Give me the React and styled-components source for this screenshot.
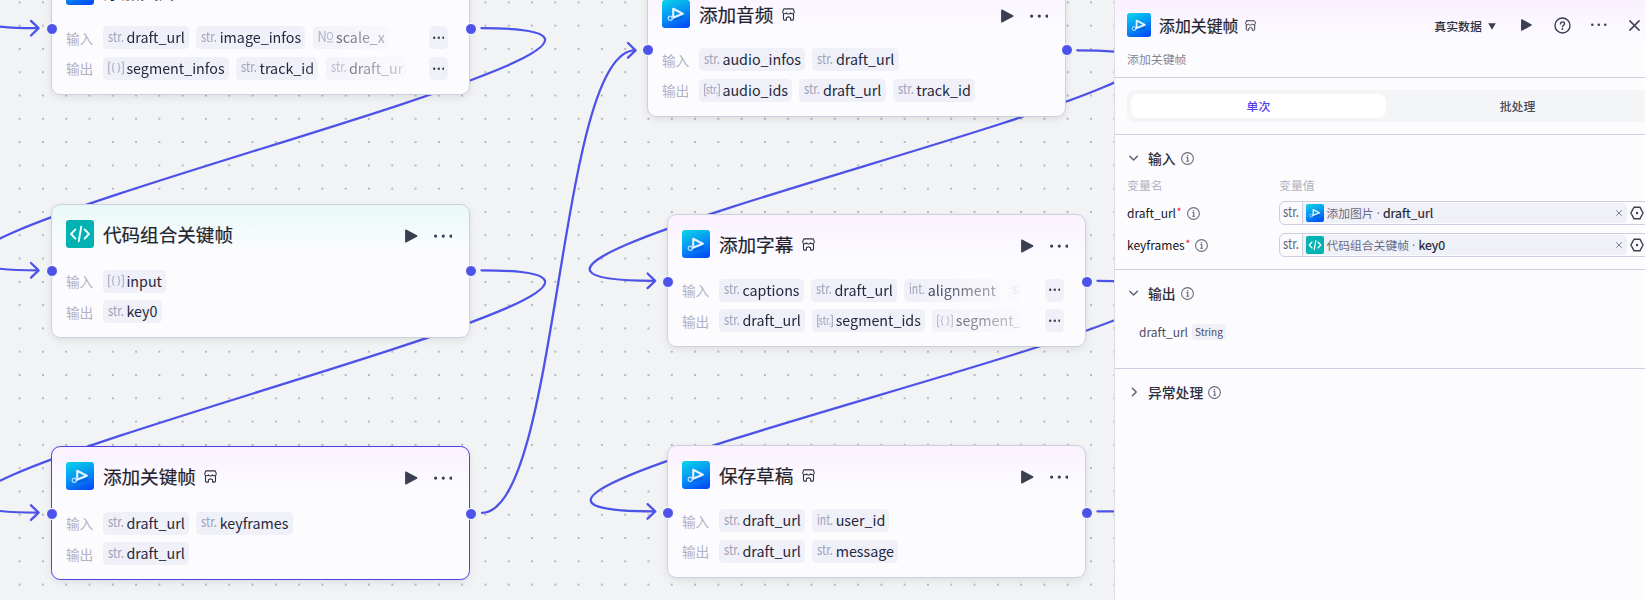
import React from "react";
import styled, { createGlobalStyle } from "styled-components";

const FONT = '"Noto Sans CJK SC", "Noto Sans", sans-serif';

const GlobalStyle = createGlobalStyle`
  * { box-sizing: border-box; }
  body { margin: 0; font-family: ${FONT}; color: #2b2f42; overflow: hidden; }
`;

const Editor = styled.main`
  display: flex;
  width: 100vw;
  height: 600px;
  overflow: hidden;
  background: #f2f3f5;
`;

/* ---------- canvas ---------- */

const Canvas = styled.section`
  position: relative;
  flex: 0 0 1114px;
  height: 600px;
  overflow: hidden;
`;

const Wires = styled.svg`
  position: absolute;
  inset: 0;
  width: 1114px;
  height: 600px;
`;

const Node = styled.article`
  position: absolute;
  left: ${(p) => p.$x}px;
  top: ${(p) => p.$y}px;
  width: 418.6px;
  height: ${(p) => p.$h}px;
  padding: 15px 14.6px 0 13.6px;
  border: 1.16px solid ${(p) => (p.$selected ? "#4e40e5" : "#cdcfe0")};
  border-radius: 9.3px;
  background: linear-gradient(${(p) => (p.$tint === "teal" ? "#e9f9f7" : "#faf1ff")}, #fcfcff 48px);
  box-shadow: 0 2px 7px rgba(0, 0, 0, 0.06), 0 4px 14px rgba(0, 0, 0, 0.03);
`;

const NodeHeader = styled.header`
  display: flex;
  align-items: center;
  height: 28px;
  margin-bottom: ${(p) => p.$gap}px;
`;

const NodeTitle = styled.h3`
  margin: 0 8.4px 0 9px;
  font-size: 18.6px;
  font-weight: 400;
  line-height: 28px;
  color: #23232c;
  -webkit-text-stroke: 0.2px #23232c;
  white-space: nowrap;
`;

const ShopSlot = styled.span`
  display: flex;
`;

const NodeActions = styled.div`
  display: flex;
  align-items: center;
  gap: 16px;
  margin: 4px 2px 0 auto;
`;

const ParamRow = styled.div`
  display: flex;
  align-items: center;
  height: 23px;
  margin-bottom: 7.5px;
  padding-right: 6.4px;
`;

const ParamLabel = styled.span`
  flex: 0 0 37px;
  font-size: 13.7px;
  line-height: 22px;
  color: #b0b1c5;
`;

const Chips = styled.div`
  display: flex;
  gap: 7.2px;
  flex: 1 1 0;
  min-width: 0;
  overflow: hidden;
  ${(p) => p.$fade && "mask-image: linear-gradient(90deg, #000 195px, rgba(0, 0, 0, 0.25) 296px, transparent 303px);"}
`;

const Chip = styled.span`
  display: flex;
  flex: none;
  align-items: center;
  gap: 2.5px;
  height: 23px;
  padding: 0 4.2px 0 5px;
  border-radius: 4.6px;
  background: #f0f0f8;
`;

const ChipName = styled.span`
  padding-bottom: 1.4px;
  font-size: 14.3px;
  line-height: 21.6px;
  color: #24283d;
`;

const More = styled.span`
  display: flex;
  flex: none;
  align-items: center;
  justify-content: center;
  width: 18.6px;
  height: 23px;
  border-radius: 4.6px;
  background: #f0f0f8;
`;

const Port = styled.i`
  position: absolute;
  left: ${(p) => p.$x - 6}px;
  top: ${(p) => p.$y - 6}px;
  width: 12px;
  height: 12px;
  border: 1.2px solid #fff;
  border-radius: 50%;
  background: #4d53e8;
`;

/* ---------- side panel ---------- */

const Panel = styled.aside`
  flex: 0 0 547px;
  height: 600px;
  border-left: 1px solid #dcdde9;
  background: linear-gradient(#faf1ff, #fcfcff 44px);
`;

const PanelHead = styled.header`
  height: 78px;
  padding: 13px 0 0 12px;
  border-bottom: 1px solid #cccee0;
`;

const PanelTitleRow = styled.div`
  display: flex;
  align-items: center;
  height: 24px;
`;

const PanelTitle = styled.h2`
  margin: 1px 6.5px 0 8px;
  font-size: 15.9px;
  font-weight: 400;
  line-height: 24px;
  color: #23232c;
  -webkit-text-stroke: 0.2px #23232c;
`;

const PanelTools = styled.div`
  display: flex;
  align-items: center;
  margin-left: auto;
  margin-right: 21px;
  color: #3b3f52;
`;

const DataMode = styled.span`
  display: flex;
  align-items: center;
  gap: 6px;
  margin-right: 25.5px;
  padding-top: 2px;
  font-size: 11.9px;
  font-weight: 500;
  line-height: 20px;
  color: #2e2f3c;
`;

const ToolGap = styled.span`
  width: ${(p) => p.$w}px;
`;

const Description = styled.p`
  margin: 12px 0 0;
  font-size: 11.9px;
  line-height: 20px;
  color: #868796;
`;

const TabsWrap = styled.div`
  height: 57px;
  padding: 12px 12px 0;
  border-bottom: 1px solid #cccee0;
`;

const Tabs = styled.div`
  display: flex;
  gap: 4px;
  height: 32px;
  padding: 4px;
  border-radius: 8px;
  background: #f4f5f7;
`;

const Tab = styled.button`
  flex: 1;
  padding: 0 0 1px;
  border: 0;
  border-radius: 8px;
  background: ${(p) => (p.$active ? "#fff" : "transparent")};
  color: ${(p) => (p.$active ? "#4e40e5" : "#4b4c58")};
  font: 500 11.9px/22px ${FONT};
`;

const Section = styled.section`
  height: ${(p) => p.$h}px;
  padding: 13px 12px 0;
  ${(p) => !p.$last && "border-bottom: 1px solid #cccee0;"}
`;

const SectionHead = styled.div`
  display: flex;
  align-items: center;
  height: 20px;
  color: #5f6175;
`;

const SectionTitle = styled.h4`
  margin: 0 5px 0 8px;
  font-size: 13.8px;
  font-weight: 500;
  line-height: 20px;
  color: #2f2f3c;
`;

const FieldGrid = styled.div`
  display: grid;
  grid-template-columns: 152px 1fr;
  grid-template-rows: 25px 24px 24px;
  row-gap: 8px;
  align-items: center;
`;

const ColumnLabel = styled.span`
  padding-top: 8px;
  font-size: 11.9px;
  line-height: 20px;
  color: #b2b2bd;
`;

const FieldName = styled.span`
  display: flex;
  align-items: center;
  font-size: 12px;
  line-height: 24px;
  color: #14151c;
`;

const Required = styled.sup`
  align-self: flex-start;
  margin: -1px 5px 0 0.5px;
  font-size: 11px;
  line-height: 22px;
  color: #f22435;
`;

const ValueBox = styled.div`
  display: flex;
  align-items: center;
  height: 24px;
  border: 1px solid #cccee0;
  border-radius: 6px;
`;

const ValueType = styled.span`
  display: flex;
  align-items: center;
  align-self: stretch;
  padding: 0 3px;
  border-right: 1px solid #cccee0;
`;

const ValueRef = styled.div`
  display: flex;
  align-items: center;
  flex: 0 0 324px;
  height: 20px;
  margin-right: 3px;
  padding: 0 5px 0 3px;
  border-radius: 0 4px 4px 0;
  background: #f0f0f8;
`;

const RefSource = styled.span`
  margin-left: 2.4px;
  font-size: 11.8px;
  line-height: 20px;
  color: #686a80;
`;

const RefDot = styled.span`
  width: 9.4px;
  padding-top: 1px;
  font-family: "Open Sans", sans-serif;
  font-size: 12px;
  line-height: 20px;
  text-align: center;
  color: #686a80;
`;

const RefKey = styled.span`
  font-size: 12.3px;
  line-height: 20px;
  color: #1d1f34;
  -webkit-text-stroke: 0.2px #1d1f34;
`;

const ClearSlot = styled.span`
  display: flex;
  margin-left: auto;
`;

const OutputRow = styled.div`
  display: flex;
  align-items: center;
  gap: 4px;
  height: 20px;
  margin: 18.5px 0 0 12px;
  font-size: 12px;
  color: #4b4c5f;
`;

const TypeTag = styled.span`
  height: 16px;
  padding: 0 3px;
  border-radius: 4px;
  background: #f0f0f8;
  font-size: 10px;
  line-height: 16px;
  color: #4b4d61;
`;

/* ---------- icons ---------- */

const PluginLogo = ({ size }) => (
  <svg width={size} height={size} viewBox="0 0 28 28">
    <defs>
      <linearGradient id="plugin" x1="0.2" y1="0" x2="0.65" y2="1">
        <stop offset="0" stopColor="#08cdec" />
        <stop offset="0.5" stopColor="#0796f2" />
        <stop offset="1" stopColor="#0350f5" />
      </linearGradient>
    </defs>
    <rect width="28" height="28" rx="3.2" fill="url(#plugin)" />
    <path d="M11 19.6 L22.4 15 L20.5 18.6 L12 20.8Z" fill="#0445cf" opacity="0.45" />
    <path d="M11.2 17.2 V8.8 L20.8 13.8 L9.6 18.2" fill="none" stroke="#e4f4ff" strokeWidth="2.1" strokeLinejoin="round" />
    <circle cx="8.3" cy="18.2" r="2.1" fill="none" stroke="#b9dcff" strokeWidth="1.2" />
  </svg>
);

const CodeLogo = ({ size }) => (
  <svg width={size} height={size} viewBox="0 0 28 28">
    <rect width="28" height="28" rx="3.2" fill="#00b2b2" />
    <path d="M9.4 9.4 L5 14 L9.4 18.6 M18.6 9.4 L23 14 L18.6 18.6 M15.2 6.8 L12.8 21.2" fill="none" stroke="#fff" strokeWidth="1.9" strokeLinecap="round" strokeLinejoin="round" />
  </svg>
);

const ShopIcon = ({ size }) => (
  <svg width={size} height={size} viewBox="0 0 13 13" fill="none" stroke="#2f3140" strokeWidth="1.1" strokeLinejoin="round" strokeLinecap="round">
    <path d="M2.2 0.9 H10.8 Q11.3 0.9 11.5 1.4 L12.3 3.9 C12.4 5.9 9.5 6.3 8.5 4.9 C7.7 6.3 5.3 6.3 4.5 4.9 C3.5 6.3 0.6 5.9 0.7 3.9 L1.5 1.4 Q1.7 0.9 2.2 0.9 Z" />
    <path d="M1.5 6.2 V11.1 Q1.5 12.1 2.5 12.1 H4.4 V9.8 L6.5 8.7 L8.6 9.8 V12.1 H10.5 Q11.5 12.1 11.5 11.1 V6.2" />
  </svg>
);

const PlayIcon = ({ w, h }) => (
  <svg width={w} height={h} viewBox="0 0 12 13">
    <path d="M0.8 0.9 L11.2 6.5 L0.8 12.1Z" fill="#3b3f52" stroke="#3b3f52" strokeWidth="1.4" strokeLinejoin="round" />
  </svg>
);

const Dots = ({ w, r }) => (
  <svg width={w} height={r * 2 + 1} viewBox={`0 0 ${w} ${r * 2 + 1}`} fill="#3b3f52">
    <circle cx={r} cy={r + 0.5} r={r} />
    <circle cx={w / 2} cy={r + 0.5} r={r} />
    <circle cx={w - r} cy={r + 0.5} r={r} />
  </svg>
);

const InfoIcon = () => (
  <svg width="13" height="13" viewBox="0 0 13 13" fill="none" stroke="#686a7e" strokeWidth="1.1">
    <circle cx="6.5" cy="6.5" r="5.9" />
    <path d="M5.4 5.6 H6.7 V9.2 M5.2 9.3 H8.1" />
    <circle cx="6.5" cy="3.8" r="0.8" fill="#686a7e" stroke="none" />
  </svg>
);

const Chevron = ({ open }) => (
  <svg width="13" height="12" viewBox="0 0 13 12" fill="none" stroke="#5f6175" strokeWidth="1.5" strokeLinecap="round" strokeLinejoin="round">
    <path d={open ? "M2.8 4.2 L6.6 8 L10.4 4.2" : "M5.4 2.2 L9.2 6 L5.4 9.8"} />
  </svg>
);

const HelpIcon = () => (
  <svg width="17" height="17" viewBox="0 0 17 17" fill="none" stroke="#3b3f52" strokeWidth="1.4" strokeLinecap="round">
    <circle cx="8.5" cy="8.5" r="7.5" />
    <path d="M6.5 6.9 C6.5 4.2 10.6 4.3 10.5 6.8 C10.5 8.3 8.5 8.3 8.5 9.8" />
    <circle cx="8.5" cy="12" r="0.95" fill="#3b3f52" stroke="none" />
  </svg>
);

const Cross = ({ size, weight, color }) => (
  <svg width={size} height={size} viewBox="0 0 10 10" fill="none" stroke={color} strokeWidth={weight} strokeLinecap="round">
    <path d="M0.8 0.8 L9.2 9.2 M9.2 0.8 L0.8 9.2" />
  </svg>
);

const HexIcon = () => (
  <svg width="14" height="14" viewBox="0 0 14 14">
    <path d="M4.1 1.2 H9.9 L13.1 7 L9.9 12.8 H4.1 L0.9 7Z" fill="none" stroke="#3b3f52" strokeWidth="1.4" strokeLinejoin="round" />
    <circle cx="7" cy="7" r="1.2" fill="#3b3f52" />
  </svg>
);

/* Condensed data-type glyph that always fills the same slot */
const MarkSvg = styled.svg`
  flex: none;
  overflow: visible;
  font-family: ${FONT};
  font-size: 14.4px;
`;

const TypeMark = ({ type, color = "#a0a2ba" }) => (
  <MarkSvg width="16" height="20" viewBox="0 0 16 20" fill={color}>
    {type.startsWith("[") && (
      <path d="M2.4 4.2 H0.7 V15.8 H2.4 M13.6 4.2 H15.3 V15.8 H13.6" fill="none" stroke={color} strokeWidth="1" />
    )}
    {type === "[str.]" && (
      <text x="1.8" y="14" textLength="12.4" lengthAdjust="spacingAndGlyphs" fontSize="12.5">str.</text>
    )}
    {type === "[{}]" && (
      <path
        d="M6.4 5.2 Q5 5.2 5 6.6 V8.4 Q5 9.6 3.9 9.8 Q5 10 5 11.2 V13 Q5 14.4 6.4 14.4 M9.6 5.2 Q11 5.2 11 6.6 V8.4 Q11 9.6 12.1 9.8 Q11 10 11 11.2 V13 Q11 14.4 9.6 14.4"
        fill="none"
        stroke={color}
        strokeWidth="1"
      />
    )}
    {type === "№" && (
      <>
        <text x="-0.5" y="14.4" textLength="9.2" lengthAdjust="spacingAndGlyphs">N</text>
        <text x="8.2" y="12.2" textLength="7.4" lengthAdjust="spacingAndGlyphs" fontSize="11">O</text>
        <path d="M8.9 13.9 H15" stroke={color} strokeWidth="1.1" />
      </>
    )}
    {type.endsWith(".") && (
      <text x="0" y="14.4" textLength="16" lengthAdjust="spacingAndGlyphs">{type}</text>
    )}
  </MarkSvg>
);

/* ---------- data ---------- */

const NODES = [
  {
    x: 51.3, y: -39.2, h: 133.8, gap: 21.4, port: 29.3, title: "添加图片", plugin: true,
    inputs: [["str.", "draft_url"], ["str.", "image_infos"], ["№", "scale_x"]],
    outputs: [["[{}]", "segment_infos"], ["str.", "track_id"], ["str.", "draft_url"]],
    more: true,
  },
  {
    x: 51.3, y: 204.2, h: 133.8, gap: 21.4, port: 271.4, title: "代码组合关键帧", plugin: false,
    inputs: [["[{}]", "input"]],
    outputs: [["str.", "key0"]],
  },
  {
    x: 51.3, y: 446.2, h: 133.8, gap: 21.4, port: 513.5, title: "添加关键帧", plugin: true, selected: true,
    inputs: [["str.", "draft_url"], ["str.", "keyframes"]],
    outputs: [["str.", "draft_url"]],
  },
  {
    x: 647.3, y: -16, h: 132.5, gap: 20.3, port: 50.3, title: "添加音频", plugin: true,
    inputs: [["str.", "audio_infos"], ["str.", "draft_url"]],
    outputs: [["[str.]", "audio_ids"], ["str.", "draft_url"], ["str.", "track_id"]],
  },
  {
    x: 667.3, y: 214.3, h: 132.5, gap: 20.3, port: 281.9, title: "添加字幕", plugin: true,
    inputs: [["str.", "captions"], ["str.", "draft_url"], ["int.", "alignment"], ["str.", "font"]],
    outputs: [["str.", "draft_url"], ["[str.]", "segment_ids"], ["[{}]", "segment_infos"]],
    more: true,
  },
  {
    x: 667.3, y: 445, h: 132.5, gap: 20.3, port: 512.6, title: "保存草稿", plugin: true,
    inputs: [["str.", "draft_url"], ["int.", "user_id"]],
    outputs: [["str.", "draft_url"], ["str.", "message"]],
  },
];

/* [from, to, horizontal pull of the control points] */
const EDGES = [
  [[481.5, -214], [38, 28.2], 335],
  [[481.5, 28.2], [38, 270.3], 335],
  [[481.5, 270.3], [38, 512.6], 335],
  [[482, 512.8], [635, 50.3], 77],
  [[1077.3, 50.3], [654.6, 280.8], 336],
  [[1097.5, 280.8], [654.6, 511.4], 336],
  [[1097.5, 511.4], [1500, 511.4], 80],
];

const FIELDS = [
  { name: "draft_url", source: "添加图片", key: "draft_url", plugin: true },
  { name: "keyframes", source: "代码组合关键帧", key: "key0", plugin: false },
];

/* ---------- pieces ---------- */

function Params({ label, items, more }) {
  return (
    <ParamRow>
      <ParamLabel>{label}</ParamLabel>
      <Chips $fade={more}>
        {items.map(([type, name], i) => (
          <Chip key={i}>
            <TypeMark type={type} />
            <ChipName>{name}</ChipName>
          </Chip>
        ))}
      </Chips>
      {more && <More><Dots w={11.6} r={1.2} /></More>}
    </ParamRow>
  );
}

function FlowNode({ node }) {
  return (
    <>
      <Node $x={node.x} $y={node.y} $h={node.h} $selected={node.selected} $tint={node.plugin ? "plugin" : "teal"}>
        <NodeHeader $gap={node.gap}>
          {node.plugin ? <PluginLogo size={28} /> : <CodeLogo size={28} />}
          <NodeTitle>{node.title}</NodeTitle>
          {node.plugin && <ShopSlot><ShopIcon size={13} /></ShopSlot>}
          <NodeActions>
            <PlayIcon w={12.5} h={14} />
            <Dots w={18.6} r={1.6} />
          </NodeActions>
        </NodeHeader>
        <Params label="输入" items={node.inputs} more={node.more} />
        <Params label="输出" items={node.outputs} more={node.more} />
      </Node>
      <Port $x={node.x + 0.6} $y={node.port} />
      <Port $x={node.x + 419.6} $y={node.port} />
    </>
  );
}

function Connections() {
  return (
    <Wires>
      <defs>
        <pattern id="dots" x="8" y="-9.3" width="23.29" height="23.29" patternUnits="userSpaceOnUse">
          <circle cx="11.65" cy="11.65" r="1.05" fill="#a6a8ad" />
        </pattern>
      </defs>
      <rect width="1114" height="600" fill="url(#dots)" />
      <g fill="none" stroke="#4d53e8" strokeWidth="2.3" strokeLinecap="round" strokeLinejoin="round">
        {EDGES.map(([[x1, y1], [x2, y2], pull], i) => (
          <g key={i}>
            <path d={`M${x1} ${y1} C${x1 + pull} ${y1} ${x2 - pull} ${y2} ${x2} ${y2}`} />
            <path d={`M${x2 - 7} ${y2 - 7.3} L${x2 + 0.6} ${y2} L${x2 - 7} ${y2 + 7.3}`} />
          </g>
        ))}
      </g>
    </Wires>
  );
}

function SidePanel() {
  return (
    <Panel>
      <PanelHead>
        <PanelTitleRow>
          <PluginLogo size={24} />
          <PanelTitle>添加关键帧</PanelTitle>
          <ShopSlot><ShopIcon size={11} /></ShopSlot>
          <PanelTools>
            <DataMode>
              真实数据
              <svg width="8" height="7" viewBox="0 0 8 7"><path d="M0.2 0.3 H7.8 L4 6.8Z" fill="#3b3f52" /></svg>
            </DataMode>
            <PlayIcon w={11} h={12} />
            <ToolGap $w={21.5} />
            <HelpIcon />
            <ToolGap $w={20} />
            <Dots w={15.6} r={1.3} />
            <ToolGap $w={22.5} />
            <Cross size={11} weight={1.3} color="#3b3f52" />
          </PanelTools>
        </PanelTitleRow>
        <Description>添加关键帧</Description>
      </PanelHead>
      <TabsWrap>
        <Tabs>
          <Tab $active>单次</Tab>
          <Tab>批处理</Tab>
        </Tabs>
      </TabsWrap>
      <Section $h={135}>
        <SectionHead>
          <Chevron open />
          <SectionTitle>输入</SectionTitle>
          <InfoIcon />
        </SectionHead>
        <FieldGrid>
          <ColumnLabel>变量名</ColumnLabel>
          <ColumnLabel>变量值</ColumnLabel>
          {FIELDS.map((f) => (
            <React.Fragment key={f.name}>
              <FieldName>{f.name}<Required>*</Required><InfoIcon /></FieldName>
              <ValueBox>
                <ValueType><TypeMark type="str." color="#5f6178" /></ValueType>
                <ValueRef>
                  {f.plugin ? <PluginLogo size={18} /> : <CodeLogo size={18} />}
                  <RefSource>{f.source}</RefSource>
                  <RefDot>·</RefDot>
                  <RefKey>{f.key}</RefKey>
                  <ClearSlot><Cross size={6} weight={1.5} color="#74768a" /></ClearSlot>
                </ValueRef>
                <HexIcon />
              </ValueBox>
            </React.Fragment>
          ))}
        </FieldGrid>
      </Section>
      <Section $h={99}>
        <SectionHead>
          <Chevron open />
          <SectionTitle>输出</SectionTitle>
          <InfoIcon />
        </SectionHead>
        <OutputRow>draft_url <TypeTag>String</TypeTag></OutputRow>
      </Section>
      <Section $h={200} $last>
        <SectionHead>
          <Chevron />
          <SectionTitle>异常处理</SectionTitle>
          <InfoIcon />
        </SectionHead>
      </Section>
    </Panel>
  );
}

export default function App() {
  return (
    <>
      <GlobalStyle />
      <Editor>
        <Canvas>
          <Connections />
          {NODES.map((n) => (
            <FlowNode key={n.title} node={n} />
          ))}
        </Canvas>
        <SidePanel />
      </Editor>
    </>
  );
}
